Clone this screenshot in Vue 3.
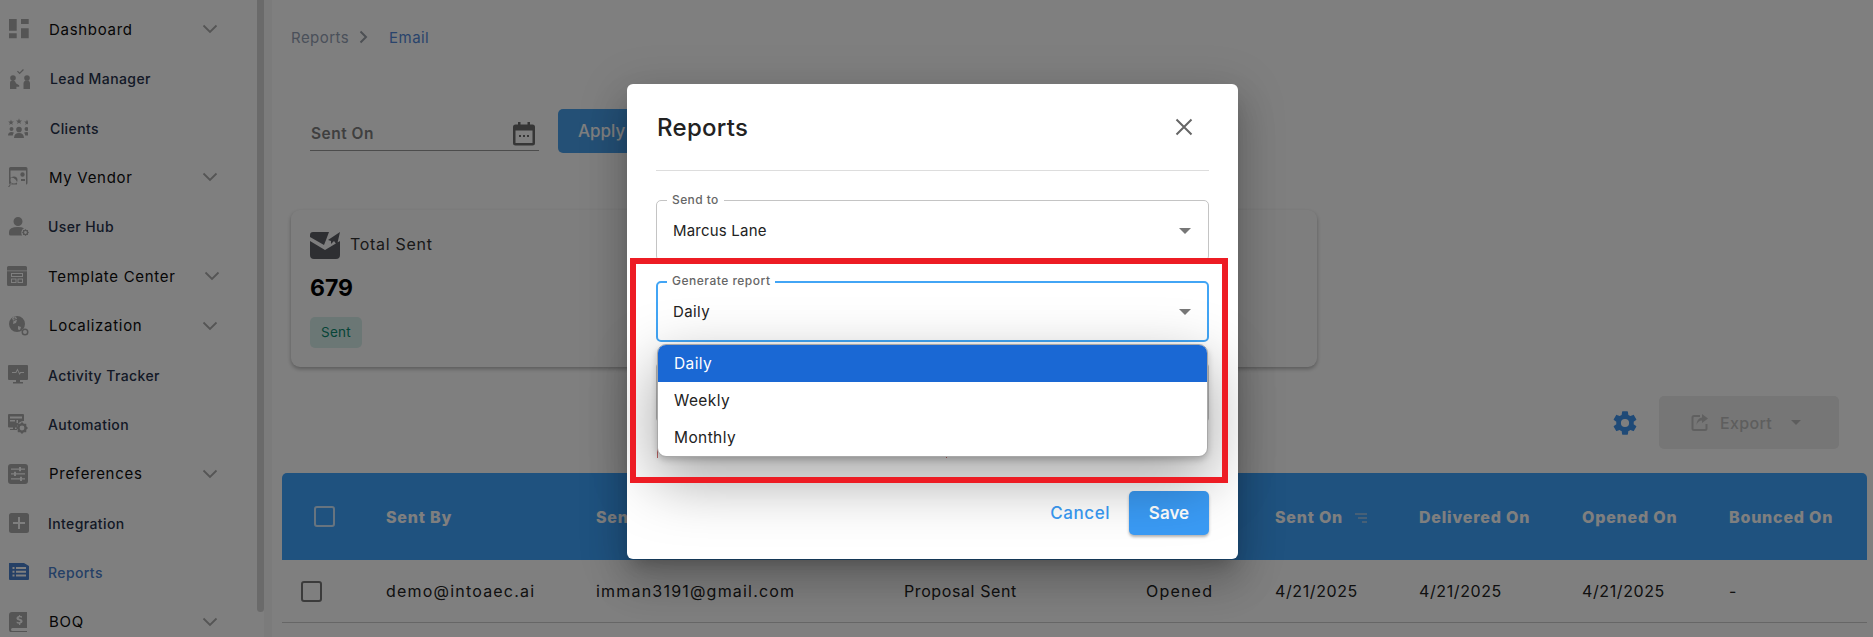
<script setup>
const c = (x, y, r) => `M${x - r} ${y}a${r} ${r} 0 1 0 ${2 * r} 0a${r} ${r} 0 1 0 ${-2 * r} 0z`
const star = (x, y, r) => {
  let d = ''
  for (let i = 0; i < 10; i++) {
    const a = -Math.PI / 2 + (i * Math.PI) / 5
    const q = i % 2 ? r * 0.42 : r
    d += `${i ? 'L' : 'M'}${(x + q * Math.cos(a)).toFixed(2)} ${(y + q * Math.sin(a)).toFixed(2)}`
  }
  return d + 'z'
}
const gear = (x, y, r) => {
  let d = ''
  for (let i = 0; i < 16; i++) {
    const a = (i * Math.PI) / 8
    const q = i % 2 ? r * 0.78 : r
    d += `${i ? 'L' : 'M'}${(x + q * Math.cos(a)).toFixed(2)} ${(y + q * Math.sin(a)).toFixed(2)}`
  }
  return d + 'z' + c(x, y, r * 0.4)
}
const nav = [
  { label: 'Dashboard', group: true, left: 9, text: 49, icon: 'M0 0h7.7v11.7H0zM0 14.3h7.7v5H0zM12 0h7.7v5H12zM12 9.3h7.7v10H12z' },
  { label: 'Lead Manager', left: 10, text: 50, icon: c(3, 9, 2.8) + 'M0 20v-6q0-2.4 3-2.4q2.4 0 3.2 2.8l3 1.9v1.4H6.4V20z' + c(17, 9, 2.8) + 'M13.5 20v-5.5q0-2.9 3.5-2.9q3 0 3 2.9V20zM7 2.6l.9-.9 1.7 1.7L13 0l.9.9-4.3 4.3z' },
  { label: 'Clients', left: 8, text: 50, icon: star(3, 4.5, 3) + star(11, 3.5, 3.2) + star(19, 4.5, 3) + c(3.5, 11, 2) + c(18.5, 11, 2) + c(11, 11.5, 2.8) + 'M0 17.5q0-3.5 3.5-3.5q1.6 0 2.5.8q-1.2 1.1-1.2 2.7zM22 17.5q0-3.5-3.5-3.5q-1.6 0-2.5.8q1.2 1.1 1.2 2.7zM6 20.5q0-5.6 5-5.6t5 5.6q-2.3 1.5-5 1.5t-5-1.5z' },
  { label: 'My Vendor', group: true, left: 8, text: 49, icon: 'M2.5 0h15.5q1.5 0 1.5 1.5V16q0 1.5-1.5 1.5H2.5Q1 17.500 1 16V1.500Q1 0 2.500 0zM2.500 3.500v7a6 6 0 0 1 6.500 7h9V3.500z' + c(6, 13, 3.500) + 'M3 16l-3 4 .8.6 3-4zM13 12h4v2h-4z' + c(14.500, 7.500, 2.200) },
  { label: 'User Hub', left: 9, text: 48, icon: c(9, 4.500, 4.500) + 'M0 15q0-5 9-5q4 0 6 1.200a5 5 0 0 0-1.800 7.300H1.500Q0 18.500 0 17z' + gear(16.500, 15.500, 3.500) },
  { label: 'Template Center', group: true, left: 7, text: 48, icon: 'M1.500 0h17Q20 0 20 1.500v17q0 1.500-1.500 1.500h-17Q0 20 0 18.500v-17Q0 0 1.500 0zM0 4.500h20v.8H0zM4 7h12v4H4zM5 8v2h10V8zM4 12.500h5.500V17H4zM5 13.500V16h3.500v-2.500zM10.500 12.500H16V17h-5.500zM11.500 13.500V16H15v-2.500z' },
  { label: 'Localization', group: true, left: 9, text: 49, icon: c(8, 8, 8) + 'M5 2.500l3 1.500-1 3-3 1zM9 10l3 1-1 3-2-.5z' + gear(5.500, 2.500, 2.500) + c(16, 16, 3.500) + c(16, 16, 2) },
  { label: 'Activity Tracker', left: 8, text: 48, icon: 'M1 0h18q1 0 1 1v13q0 1-1 1h-7v2h3v1.500H5V17h3v-2H1q-1 0-1-1V1q0-1 1-1zM4 7v1h4.200l1.300-2.500L11.500 10l1.300-2H16V7h-3.800l-.7 1-2-4.500L7.600 7z' },
  { label: 'Automation', left: 8, text: 48, icon: 'M1 0h14q1 0 1 1v6a6.500 6.500 0 0 0-7 6.500H7v1.500h3v1H2v-1h3v-1.500H1q-1 0-1-1V1q0-1 1-1zM2 2.500v2h12v-2zM2 6v1.500h5V6zM8.500 6v3h1.500V6z' + gear(14, 14, 6) },
  { label: 'Preferences', group: true, left: 8, text: 49, icon: 'M3 0h14q3 0 3 3v14q0 3-3 3H3q-3 0-3-3V3q0-3 3-3zM3 4.500v1.300h8v1.500h2v-1.500h4V4.500h-4V3h-2v1.500zM3 9.300v1.300h3v1.500h2v-1.500h9V9.300H8V7.800H6v1.500zM3 14.200v1.300h9V17h2v-1.500h3v-1.300h-3v-1.500h-2v1.500z' },
  { label: 'Integration', left: 9, text: 48, icon: 'M2.500 0h15Q20 0 20 2.500v15q0 2.500-2.500 2.500h-15Q0 20 0 17.500v-15Q0 0 2.500 0zM9 4v5H4v2h5v5h2v-5h5V9h-5V4z' },
  { label: 'Reports', left: 9, text: 48, active: true, icon: 'M0 0h15l5 3v13q0 1-1 1H1q-1 0-1-1zM3.500 4v2h2V4zM7 4v2h10V4zM3.500 7.800v2h2v-2zM7 7.800v2h10v-2zM3.500 11.600v2h2v-2zM7 11.600v2h10v-2z' },
  { label: 'BOQ', group: true, left: 9, text: 49, icon: 'M3 0h15v16H3.500q-1.500 0-1.500 1.500T3.500 19H18v1.500H3q-3 0-3-3V3q0-3 3-3zM10 3v.7q-2.600.5-2.600 2.500 0 1.900 2.600 2.300 1.400.3 1.400 1 0 .8-1.400.8-1.300 0-2.300-.7v1.500q.9.5 2.300.6V13h1.300v-1.400q2.300-.4 2.300-2.400 0-1.800-2.300-2.300-1.700-.3-1.700-.9 0-.7 1.300-.7 1.100 0 2.100.5V4.300q-.9-.4-2.100-.5V3z' },
]
const head = [
  { t: 'Sent By' }, { t: 'Sent To' }, { t: 'Event' }, { t: 'Status' },
  { t: 'Sent On', sort: true }, { t: 'Delivered On' }, { t: 'Opened On' }, { t: 'Bounced On' },
]
const row = [
  { v: 'demo@intoaec.ai', wide: true }, { v: 'imman3191@gmail.com', wide: true }, { v: 'Proposal Sent' }, { v: 'Opened', wide: true },
  { v: '4/21/2025' }, { v: '4/21/2025' }, { v: '4/21/2025' }, { v: '-' },
]
</script>

<template>
  <div class="page">
    <aside class="side">
      <div
        v-for="n in nav"
        :key="n.label"
        class="nav"
        :class="{ group: n.group, active: n.active }"
      >
        <svg class="nav-icon" :style="{ marginLeft: n.left + 'px', marginRight: n.text - n.left - 20 + 'px' }" viewBox="0 0 20 20" width="20" height="20">
          <path :d="n.icon" fill-rule="evenodd" />
        </svg>
        <span class="nav-text">{{ n.label }}</span>
        <svg v-if="n.group" class="chev" :class="{ far: n.label === 'Template Center' }" viewBox="0 0 16 10" width="16" height="10">
          <path d="M1.500 1.500 8 8l6.500-6.500" fill="none" stroke="#aaa" stroke-width="1.800" />
        </svg>
      </div>
    </aside>
    <div class="rail"><div class="thumb"></div></div>

    <main class="main">
      <nav class="crumbs">
        <span class="crumb">Reports</span>
        <svg viewBox="0 0 10 14" width="10" height="14"><path d="M1.500 1.500 7 7l-5.500 5.500" fill="none" stroke="#9aa0a8" stroke-width="2" /></svg>
        <span class="crumb now">Email</span>
      </nav>

      <section class="filters">
        <div class="date">
          <span class="date-label">Sent On</span>
          <svg viewBox="0 0 22 24" width="22" height="24">
            <path fill="#6c6c6c" fill-rule="evenodd" d="M5 0h2.500v2.500h7V0H17v2.500h2.500Q22 2.500 22 5v16q0 2.500-2.500 2.500h-17Q0 23.500 0 21V5q0-2.500 2.500-2.500H5zM2.500 8.500V21h17V8.500zM6 13h2v2H6zM10 13h2v2h-2zM14 13h2v2h-2z" />
          </svg>
        </div>
        <button class="apply">Apply</button>
      </section>

      <section class="card">
        <div class="card-head">
          <svg viewBox="0 0 30 27" width="30" height="27">
            <path fill="#5c5e64" d="M0 3q0-3 3-3h16l-3 8-2 5L0 5zM0 9l15 9 15-9v14q0 4-4 4H4q-4 0-4-4zM18 8L30 0l-3 13-3-4-3 3v-3z" />
          </svg>
          <span class="card-title">Total Sent</span>
        </div>
        <div class="count">679</div>
        <span class="chip">Sent</span>
      </section>

      <section class="tools">
        <svg viewBox="0 0 24 24" width="28" height="28"><path fill="#3f94ee" fill-rule="evenodd" d="M19.430 12.980c.04-.32.070-.64.070-.98s-.03-.66-.07-.98l2.110-1.650c.19-.15.240-.42.120-.64l-2-3.460c-.12-.22-.39-.3-.61-.22l-2.490 1c-.52-.4-1.080-.73-1.690-.98l-.38-2.650A.49.49 0 0 0 14 2h-4c-.25 0-.46.18-.49.420l-.38 2.650c-.61.250-1.170.590-1.690.98l-2.490-1c-.23-.09-.49 0-.61.220l-2 3.460c-.13.220-.07.490.12.640l2.110 1.650c-.04.320-.07.650-.07.980s.03.660.07.980l-2.110 1.650c-.19.150-.24.420-.12.640l2 3.460c.12.220.39.300.61.220l2.490-1c.52.400 1.080.730 1.690.980l.38 2.650c.03.240.24.420.49.420h4c.25 0 .46-.18.49-.42l.38-2.650c.61-.25 1.170-.59 1.690-.98l2.490 1c.23.090.49 0 .61-.22l2-3.460c.12-.22.07-.49-.12-.64zM12 15.500a3.500 3.500 0 1 1 0-7 3.500 3.500 0 0 1 0 7z" /></svg>
        <button class="export">
          <svg viewBox="0 0 18 18" width="18" height="18"><path fill="none" stroke="#c0c0c0" stroke-width="2" d="M9 2H3Q1.500 2 1.500 3.500v11Q1.500 16 3 16h11q1.500 0 1.500-1.500V10" /><path fill="#c0c0c0" d="M11 0l6 4.500-6 4.500V6.500Q7 6.500 5.500 11q0-6.500 5.500-7.500z" /></svg>
          <span>Export</span>
          <i class="drop small"></i>
        </button>
      </section>

      <section class="table">
        <div class="thead">
          <div class="cell check"><i class="box light"></i></div>
          <div v-for="h in head" :key="h.t" class="cell">
            {{ h.t }}
            <svg v-if="h.sort" class="sort" viewBox="0 0 12 10" width="12" height="10"><path d="M0 1h12M3 5h9M7 9h5" stroke="#ddd" stroke-width="1" /></svg>
          </div>
        </div>
        <div class="tbody">
          <div class="cell check"><i class="box"></i></div>
          <div v-for="(r, i) in row" :key="i" class="cell" :class="{ wide: r.wide }">{{ r.v }}</div>
        </div>
        <div class="next"></div>
      </section>
    </main>

    <div class="backdrop"></div>

    <div class="dialog">
      <header class="dlg-head">
        <h2>Reports</h2>
        <svg viewBox="0 0 18 18" width="18" height="18"><path d="M1.500 1.500l15 15M16.500 1.500l-15 15" stroke="#666" stroke-width="2" /></svg>
      </header>
      <div class="fields">
        <div class="field">
          <label>Send to</label>
          <span>Marcus Lane</span>
          <i class="drop"></i>
        </div>
        <div class="field focus">
          <label>Generate report</label>
          <span>Daily</span>
          <i class="drop"></i>
          <ul class="menu">
            <li class="sel">Daily</li>
            <li>Weekly</li>
            <li>Monthly</li>
          </ul>
        </div>
        <div class="field plain"></div>
        <div class="note"><i></i><i></i></div>
      </div>
      <footer class="dlg-foot">
        <button class="cancel">Cancel</button>
        <button class="save">Save</button>
      </footer>
    </div>

    <div class="mark"></div>
  </div>
</template>

<style scoped>
.page {
  position: relative;
  display: flex;
  width: 1873px;
  height: 637px;
  overflow: hidden;
  background: #fff;
  font-family: Inter, "Noto Sans", sans-serif;
  color: #1a1a1a;
}
.side {
  width: 257px;
  flex: none;
  padding-top: 4.600px;
  box-sizing: border-box;
}
.nav {
  display: flex;
  align-items: center;
  height: 49.400px;
  font-size: 14px;
  font-weight: 500;
  letter-spacing: .4px;
  color: #27324c;
}
.nav-icon { flex: none; fill: #aaa; }
.nav.group { font-size: 15px; font-weight: 400; color: #0c0c0c; letter-spacing: .7px; }
.nav.active { color: #4a80cc; }
.nav.active .nav-icon { fill: #4a80cc; }
.chev { margin-left: auto; margin-right: 39px; }
.chev.far { margin-right: 37px; }
.rail { width: 7px; flex: none; background: #fff; }
.thumb { height: 612px; background: #d4d4d4; border-radius: 0 0 4px 4px; }
.main {
  flex: 1;
  min-width: 0;
  padding: 0 6px 0 10px;
  border-left: 8px solid #f6f6f6;
  box-sizing: border-box;
}
.crumbs {
  display: flex;
  align-items: center;
  gap: 10px;
  height: 20px;
  margin: 27px 0 0 9px;
  font-size: 15px;
}
.crumb { color: #94a0b4; letter-spacing: .45px; }
.crumb.now { margin-left: 10px; color: #5288d8; }
.filters {
  display: flex;
  align-items: flex-start;
  gap: 19px;
  margin: 62px 0 0 28px;
}
.date {
  display: flex;
  align-items: center;
  justify-content: space-between;
  width: 229px;
  height: 42px;
  padding: 8px 4px 0 1px;
  box-sizing: border-box;
  border-bottom: 1px solid #999;
}
.date-label { font-size: 15.500px; font-weight: 600; letter-spacing: .5px; color: #7e7e7e; }
.apply {
  width: 140px;
  height: 44px;
  border: 0;
  border-radius: 5px;
  background: #48a0ec;
  color: #fff;
  font: 500 17px Inter, sans-serif;
  text-align: left;
  padding-left: 20px;
}
.card {
  width: 1026px;
  height: 157px;
  margin: 57px 0 0 9px;
  padding: 22px 19px;
  box-sizing: border-box;
  background: #fdfdfd;
  border-radius: 9px;
  box-shadow: 0 2px 4px rgba(0, 0, 0, .3);
}
.card-head { display: flex; align-items: center; gap: 10px; height: 27px; }
.card-title { margin-top: -3px; font-size: 16px; letter-spacing: .7px; color: #333; }
.count { margin-top: 14px; font-size: 23px; line-height: 30px; font-weight: 700; color: #000; }
.chip {
  display: inline-block;
  margin-top: 14px;
  width: 52px;
  height: 31px;
  line-height: 31px;
  text-align: center;
  border-radius: 5px;
  background: #d7eeea;
  color: #0d8a70;
  font-size: 13.500px;
  letter-spacing: .3px;
}
.tools {
  display: flex;
  justify-content: flex-end;
  align-items: center;
  gap: 20px;
  height: 53px;
  margin: 29px 28px 0 0;
}
.export {
  display: flex;
  align-items: center;
  justify-content: center;
  gap: 11px;
  width: 180px;
  height: 53px;
  padding-right: 12px;
  border: 0;
  border-radius: 5px;
  background: #ececec;
  color: #bcbcbc;
  font: 500 16px Inter, sans-serif;
  letter-spacing: .3px;
}
.table { margin-top: 24px; }
.thead, .tbody {
  display: grid;
  grid-template-columns: 104px 210px 308px 242px 129px 144px 163px 147px 138px;
  align-items: center;
}
.thead {
  height: 87px;
  background: #3fa4ff;
  border-radius: 5px 5px 0 0;
  color: #fff;
  font-size: 16px;
  font-weight: 800;
  letter-spacing: .8px;
}
.tbody {
  height: 63px;
  border-bottom: 1px solid #ccc;
  box-sizing: border-box;
  font-size: 16px;
  letter-spacing: .6px;
  color: #222;
}
.tbody .wide { letter-spacing: 1.200px; }
.next { height: 20px; }
.cell { white-space: nowrap; }
.check { display: flex; }
.thead .check { padding-left: 32px; }
.tbody .check { padding-left: 19px; }
.box {
  width: 17px;
  height: 17px;
  border: 2px solid #777;
  border-radius: 3px;
  display: block;
}
.box.light { border-color: #fff; opacity: .75; }
.sort { margin-left: 8px; }
.drop {
  width: 0;
  height: 0;
  border: 6px solid transparent;
  border-top: 6px solid #777;
  border-bottom: 0;
  display: block;
}
.drop.small { border-width: 5px 5px 0; border-top-color: #bbb; margin-left: 8px; }
.backdrop { position: absolute; inset: 0; background: rgba(0, 0, 0, .5); }
.dialog {
  position: absolute;
  z-index: 2;
  left: 627px;
  top: 84px;
  width: 611px;
  height: 475px;
  padding: 0 29px 0 29px;
  box-sizing: border-box;
  display: flex;
  flex-direction: column;
  background: #fff;
  border-radius: 6px;
  box-shadow: 0 11px 15px -7px rgba(0, 0, 0, .2), 0 24px 38px 3px rgba(0, 0, 0, .14), 0 9px 46px 8px rgba(0, 0, 0, .12);
}
.dlg-head {
  display: flex;
  align-items: center;
  justify-content: space-between;
  padding: 0 16px 0 1px;
  box-sizing: content-box;
  height: 86px;
  border-bottom: 1px solid #ddd;
  flex: none;
}
.dlg-head h2 { margin: 0; font-size: 24px; font-weight: 500; letter-spacing: .3px; color: #222; }
.fields { display: flex; flex-direction: column; gap: 20px; margin-top: 29px; }
.field {
  position: relative;
  display: flex;
  align-items: center;
  justify-content: space-between;
  height: 61px;
  padding: 0 17px 0 16px;
  box-sizing: border-box;
  border: 1px solid #c4c4c4;
  border-radius: 5px;
  font-size: 15px;
  letter-spacing: .2px;
  color: #222;
}
.field label {
  position: absolute;
  left: 10px;
  top: -8px;
  padding: 0 5px;
  background: #fff;
  font-size: 12px;
  line-height: 14px;
  font-weight: 500;
  color: #666;
  letter-spacing: .4px;
}
.field.focus { border: 2px solid #42a5f5; padding-left: 15px; padding-right: 16px; letter-spacing: .4px; }
.field.focus label { top: -9px; left: 9px; letter-spacing: .5px; }
.menu {
  position: absolute;
  left: -1px;
  right: -1px;
  top: 60.500px;
  margin: 0;
  padding: 0;
  list-style: none;
  background: #fff;
  border: 1.500px solid #a8a8a8;
  border-radius: 9px;
  overflow: hidden;
  z-index: 2;
  font-size: 15.500px;
  box-shadow: 0 3px 6px rgba(0, 0, 0, .2);
}
.menu li { height: 37px; line-height: 37px; padding-left: 16px; color: #222; }
.menu li.sel { background: #1a68d4; color: #fff; }
.field.focus::after {
  content: "";
  position: absolute;
  left: 0;
  right: 0;
  top: 62px;
  height: 110px;
  border-radius: 9px;
  box-shadow: 0 22px 60px 4px rgba(0, 0, 0, .35);
  z-index: 1;
}
.note { display: flex; gap: 288px; height: 12px; margin-top: 3px; padding-left: 1px; }
.note i { width: 1px; height: 12px; background: #c96a6a; }
.dlg-foot {
  display: flex;
  justify-content: flex-end;
  align-items: center;
  gap: 19px;
  margin-top: auto;
  margin-bottom: 24px;
  position: relative;
}
.cancel { border: 0; background: none; padding: 0; color: #3a9bf5; font: 500 17px Inter, sans-serif; letter-spacing: .55px; }
.save {
  width: 80px;
  height: 44px;
  border: 0;
  border-radius: 5px;
  background: #3a9bf5;
  color: #fff;
  font: 600 17px Inter, sans-serif;
  box-shadow: 0 2px 3px rgba(0, 0, 0, .3);
}
.mark {
  position: absolute;
  z-index: 3;
  left: 630px;
  top: 258px;
  width: 598px;
  height: 225px;
  box-sizing: border-box;
  border: 6px solid #ed1c24;
}
</style>
